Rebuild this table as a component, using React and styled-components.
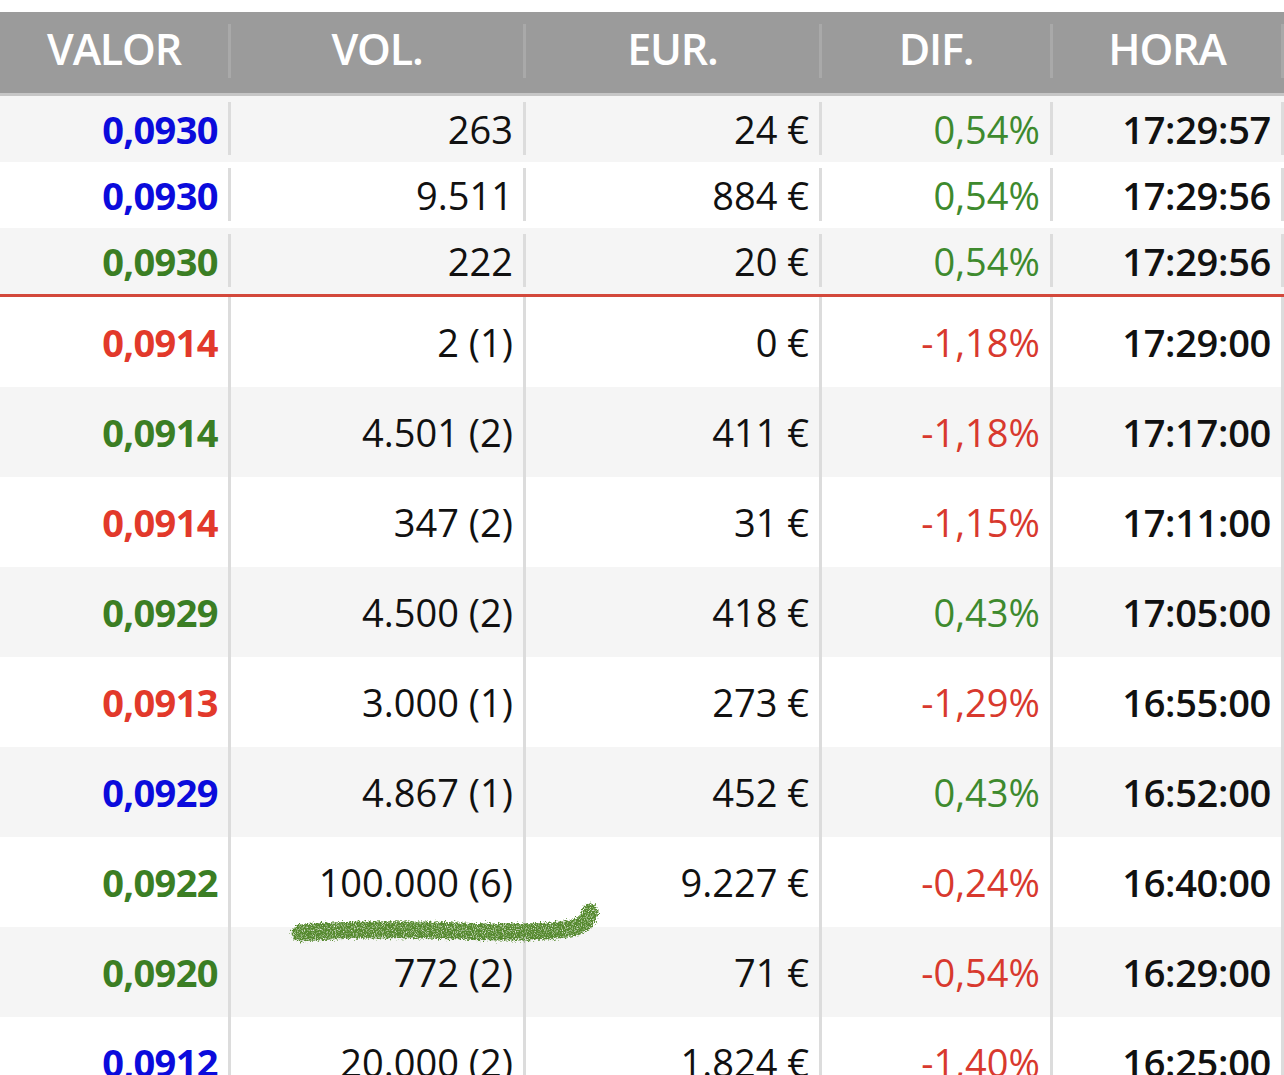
import React from "react";
import styled, { createGlobalStyle } from "styled-components";

const Global = createGlobalStyle`
  html, body { margin: 0; padding: 0; background: #fff; }
  body { font-family: "Open Sans", "Noto Sans", "Liberation Sans", sans-serif; }
  * { box-sizing: border-box; }
`;

const COLS = "231px 295px 296px 231px 231px";

const Page = styled.div`
  padding-top: 12px;
  width: 1284px;
  height: 1075px;
  overflow: hidden;
  position: relative;
`;

const Header = styled.div`
  display: grid;
  grid-template-columns: ${COLS};
  background: #9b9b9b;
  padding: 12px 0 15px;
  border-bottom: 3px solid #c6c6c6;
`;

const HeadCell = styled.div`
  height: 54px;
  padding-bottom: 5px;
  display: flex;
  align-items: center;
  justify-content: center;
  color: #fff;
  font-size: 43px;
  font-weight: 600;
  letter-spacing: -1.2px;
  border-right: 3px solid #a9a9a9;
`;

const Row = styled.div`
  display: grid;
  grid-template-columns: ${COLS};
  background: ${(p) => (p.$alt ? "#f5f5f5" : "#ffffff")};
  padding: ${(p) => (p.$compact ? "6px 0 7px" : "0")};
  height: ${(p) => (p.$compact ? "66px" : "90px")};
`;

const Divider = styled.div`
  height: 3px;
  background: #d3483b;
`;

const Cell = styled.div`
  display: flex;
  align-items: center;
  justify-content: flex-end;
  padding-right: 10px;
  border-right: 3px solid #dcdcdc;
  font-size: 38px;
  line-height: 1;
  white-space: nowrap;
  color: ${(p) => p.$color || "#111"};
  font-weight: ${(p) => p.$weight || 400};
  letter-spacing: ${(p) => (p.$weight === 700 ? "-0.6px" : p.$weight === 600 ? "-0.3px" : "0")};
`;

const Squiggle = styled.svg`
  position: absolute;
  left: 280px;
  top: 895px;
  width: 330px;
  height: 60px;
  pointer-events: none;
`;

const VC = { b: "#0b0bdc", g: "#3b7e24", r: "#e2392b" };
const DC = { g: "#3e8a2e", r: "#d8392e" };

const top = [
  ["b", "0,0930", "263", "24 €", "0,54%", "g", "17:29:57"],
  ["b", "0,0930", "9.511", "884 €", "0,54%", "g", "17:29:56"],
  ["g", "0,0930", "222", "20 €", "0,54%", "g", "17:29:56"],
];

const rest = [
  ["r", "0,0914", "2 (1)", "0 €", "-1,18%", "r", "17:29:00"],
  ["g", "0,0914", "4.501 (2)", "411 €", "-1,18%", "r", "17:17:00"],
  ["r", "0,0914", "347 (2)", "31 €", "-1,15%", "r", "17:11:00"],
  ["g", "0,0929", "4.500 (2)", "418 €", "0,43%", "g", "17:05:00"],
  ["r", "0,0913", "3.000 (1)", "273 €", "-1,29%", "r", "16:55:00"],
  ["b", "0,0929", "4.867 (1)", "452 €", "0,43%", "g", "16:52:00"],
  ["g", "0,0922", "100.000 (6)", "9.227 €", "-0,24%", "r", "16:40:00"],
  ["g", "0,0920", "772 (2)", "71 €", "-0,54%", "r", "16:29:00"],
  ["b", "0,0912", "20.000 (2)", "1.824 €", "-1,40%", "r", "16:25:00"],
];

function DataRow({ d, alt, compact }) {
  const [vc, v, vol, eur, dif, dc, hora] = d;
  return (
    <Row $alt={alt} $compact={compact}>
      <Cell $color={VC[vc]} $weight={700}>{v}</Cell>
      <Cell>{vol}</Cell>
      <Cell>{eur}</Cell>
      <Cell $color={DC[dc]}>{dif}</Cell>
      <Cell $weight={600}>{hora}</Cell>
    </Row>
  );
}

export default function App() {
  return (
    <Page>
      <Global />
      <Header>
        <HeadCell>VALOR</HeadCell>
        <HeadCell>VOL.</HeadCell>
        <HeadCell>EUR.</HeadCell>
        <HeadCell>DIF.</HeadCell>
        <HeadCell>HORA</HeadCell>
      </Header>
      {top.map((d, i) => (
        <DataRow key={"t" + i} d={d} alt={i % 2 === 0} compact />
      ))}
      <Divider />
      {rest.map((d, i) => (
        <DataRow key={"r" + i} d={d} alt={i % 2 === 1} />
      ))}
      <Squiggle viewBox="0 0 330 60">
        <defs>
          <filter id="spray" x="-10%" y="-60%" width="120%" height="220%">
            <feTurbulence type="fractalNoise" baseFrequency="0.6" numOctaves="2" seed="5" result="n" />
            <feDisplacementMap in="SourceGraphic" in2="n" scale="8" xChannelSelector="R" yChannelSelector="G" result="d" />
            <feTurbulence type="fractalNoise" baseFrequency="0.9" numOctaves="2" seed="9" result="n2" />
            <feColorMatrix in="n2" type="matrix"
              values="0 0 0 0 0  0 0 0 0 0  0 0 0 0 0  0 0 0 2.6 -0.35" result="mask" />
            <feComposite in="d" in2="mask" operator="in" result="c" />
            <feGaussianBlur in="c" stdDeviation="0.4" />
          </filter>
        </defs>
        <path
          d="M20 38 C 60 35, 120 34, 180 36 C 230 38, 272 38, 296 32 C 304 29, 309 25, 310 17"
          fill="none"
          stroke="#55892f"
          strokeWidth="17"
          strokeLinecap="round"
          filter="url(#spray)"
        />
      </Squiggle>
    </Page>
  );
}
